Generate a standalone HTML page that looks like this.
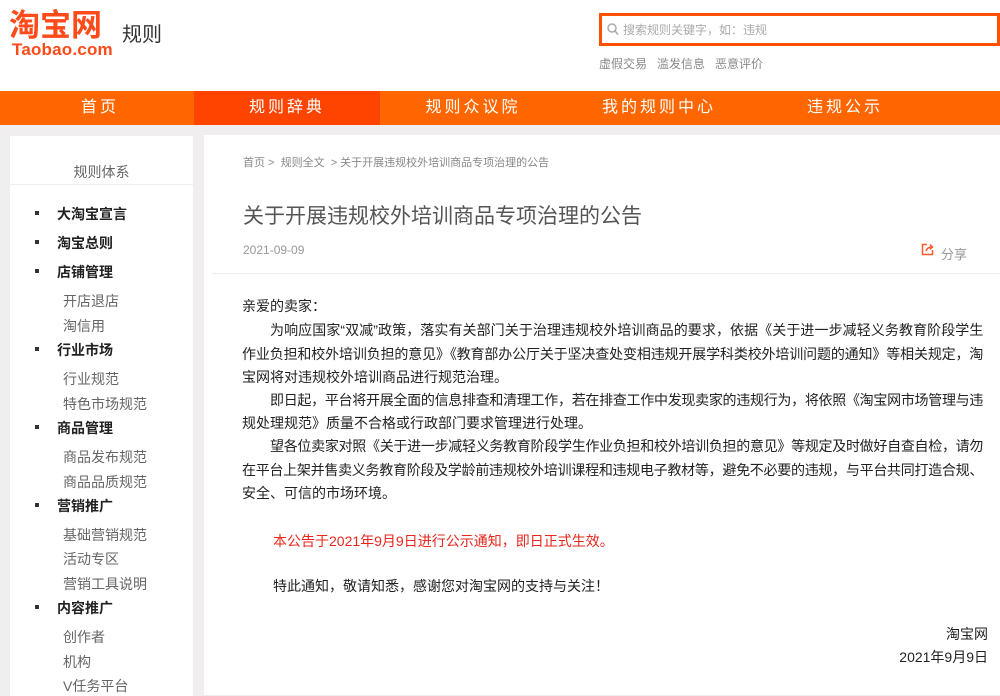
<!DOCTYPE html>
<html><head><meta charset="utf-8">
<style>
*{margin:0;padding:0;box-sizing:border-box}
body{width:1000px;height:683px;overflow:hidden;background:#f0eeee;font-family:"Liberation Sans","Noto Sans CJK SC",sans-serif;position:relative}
.a{position:absolute;white-space:nowrap}
#hdr{position:absolute;left:0;top:0;width:1000px;height:91px;background:#fff}
#nav{position:absolute;left:0;top:91px;width:1000px;height:34px;background:#ff6600}
.ni{position:absolute;top:0;height:34px;line-height:34px;color:#fff;font-size:16px;text-align:center;letter-spacing:3px}
#side{position:absolute;left:10px;top:136px;width:183px;height:560px;background:#fff}
#main{position:absolute;left:204px;top:135px;width:796px;height:560px;background:#fff}
.b{font-size:14px;font-weight:bold;color:#222}
.s{font-size:14px;color:#666}
.dot{position:absolute;left:35px;width:4px;height:4px;background:#333}
.p{font-size:14px;color:#222;line-height:14px}
.j{position:absolute;font-size:14px;color:#222;line-height:14px;white-space:nowrap;letter-spacing:-0.4px;text-align:justify;text-align-last:justify;overflow:visible}
.f{left:242px;width:741px}
.i{left:270px;width:713px}
</style></head><body>
<div id="hdr">
<div class="a" style="left:9px;top:9px;font-size:31px;font-weight:bold;color:#ff4a1a;letter-spacing:0px;line-height:34px">淘宝网</div>
<div class="a" style="left:12px;top:41px;font-size:17px;font-weight:bold;color:#ff4a1a;line-height:17px;letter-spacing:0.2px">Taobao.com</div>
<div class="a" style="left:122px;top:24px;font-size:20px;color:#333;line-height:22px">规则</div>
<div class="a" style="left:599px;top:13px;width:401px;height:33px;border:3px solid #ff5000;background:#fff"></div>
<svg class="a" style="left:607px;top:23px" width="12" height="13" viewBox="0 0 12 13"><circle cx="5" cy="5" r="4" fill="none" stroke="#aaa" stroke-width="1.5"/><path d="M8 8l3 3.5" stroke="#aaa" stroke-width="1.6"/></svg>
<div class="a" style="left:623px;top:23px;font-size:12px;color:#aaa;line-height:14px">搜索规则关键字，如：违规</div>
<div class="a" style="left:599px;top:57px;font-size:12px;color:#888;line-height:14px">虚假交易&nbsp;&nbsp;&nbsp;滥发信息&nbsp;&nbsp;&nbsp;恶意评价</div>
</div>
<div id="nav">
<div class="ni" style="left:0;width:200px">首页</div>
<div class="ni" style="left:194px;width:186px;background:#ff4400">规则辞典</div>
<div class="ni" style="left:380px;width:186px">规则众议院</div>
<div class="ni" style="left:566px;width:186px">我的规则中心</div>
<div class="ni" style="left:752px;width:186px">违规公示</div>
</div>
<div id="side">
<div class="a" style="left:0;width:183px;top:26px;text-align:center;font-size:14px;color:#666">规则体系</div>
<div style="position:absolute;left:0;top:48px;width:183px;height:1px;background:#eee"></div>
</div>
<div class="dot" style="top:211px"></div><div class="a b" style="left:57px;top:204px">大淘宝宣言</div>
<div class="dot" style="top:240px"></div><div class="a b" style="left:57px;top:233px">淘宝总则</div>
<div class="dot" style="top:269px"></div><div class="a b" style="left:57px;top:262px">店铺管理</div>
<div class="a s" style="left:63px;top:291px">开店退店</div>
<div class="a s" style="left:63px;top:316px">淘信用</div>
<div class="dot" style="top:347px"></div><div class="a b" style="left:57px;top:340px">行业市场</div>
<div class="a s" style="left:63px;top:369px">行业规范</div>
<div class="a s" style="left:63px;top:394px">特色市场规范</div>
<div class="dot" style="top:425px"></div><div class="a b" style="left:57px;top:418px">商品管理</div>
<div class="a s" style="left:63px;top:447px">商品发布规范</div>
<div class="a s" style="left:63px;top:472px">商品品质规范</div>
<div class="dot" style="top:503px"></div><div class="a b" style="left:57px;top:496px">营销推广</div>
<div class="a s" style="left:63px;top:525px">基础营销规范</div>
<div class="a s" style="left:63px;top:549px">活动专区</div>
<div class="a s" style="left:63px;top:574px">营销工具说明</div>
<div class="dot" style="top:605px"></div><div class="a b" style="left:57px;top:598px">内容推广</div>
<div class="a s" style="left:63px;top:627px">创作者</div>
<div class="a s" style="left:63px;top:652px">机构</div>
<div class="a s" style="left:63px;top:676px">V任务平台</div>
<div id="main">
<div style="position:absolute;left:8px;top:138px;width:788px;height:1px;background:#eee"></div>
</div>
<div class="a" style="left:243px;top:154px;font-size:11px;color:#888">首页 &gt;&nbsp; 规则全文 &nbsp;&gt; 关于开展违规校外培训商品专项治理的公告</div>
<div class="a" style="left:243px;top:200px;font-size:21px;color:#555">关于开展违规校外培训商品专项治理的公告</div>
<div class="a" style="left:243px;top:243px;font-size:12px;color:#999">2021-09-09</div>
<svg class="a" style="left:921px;top:243px" width="13" height="13" viewBox="0 0 13 13"><path d="M6 1.5H1.5v10h10V7" fill="none" stroke="#ff5a2a" stroke-width="1.5"/><path d="M5 8c1-3 3-4 6-4M9 1.5l2.5 2.5L9 6.5" fill="none" stroke="#ff5a2a" stroke-width="1.5"/></svg>
<div class="a" style="left:941px;top:244px;font-size:13px;color:#999">分享</div>
<div class="a p" style="left:242px;top:299px">亲爱的卖家：</div>
<div class="j i" style="top:323px">为响应国家“双减”政策，落实有关部门关于治理违规校外培训商品的要求，依据《关于进一步减轻义务教育阶段学生</div>
<div class="j f" style="top:347px">作业负担和校外培训负担的意见》《教育部办公厅关于坚决查处变相违规开展学科类校外培训问题的通知》等相关规定，淘</div>
<div class="a p" style="left:242px;top:370px">宝网将对违规校外培训商品进行规范治理。</div>
<div class="j i" style="top:393px">即日起，平台将开展全面的信息排查和清理工作，若在排查工作中发现卖家的违规行为，将依照《淘宝网市场管理与违</div>
<div class="a p" style="left:242px;top:416px">规处理规范》质量不合格或行政部门要求管理进行处理。</div>
<div class="j i" style="top:439px">望各位卖家对照《关于进一步减轻义务教育阶段学生作业负担和校外培训负担的意见》等规定及时做好自查自检，请勿</div>
<div class="j f" style="top:463px">在平台上架并售卖义务教育阶段及学龄前违规校外培训课程和违规电子教材等，避免不必要的违规，与平台共同打造合规、</div>
<div class="a p" style="left:242px;top:486px">安全、可信的市场环境。</div>
<div class="a p" style="left:273px;top:534px;color:#e8261c">本公告于2021年9月9日进行公示通知，即日正式生效。</div>
<div class="a p" style="left:273px;top:579px">特此通知，敬请知悉，感谢您对淘宝网的支持与关注！</div>
<div class="a p" style="right:12px;top:627px">淘宝网</div>
<div class="a p" style="right:12px;top:650px">2021年9月9日</div>
</body></html>
